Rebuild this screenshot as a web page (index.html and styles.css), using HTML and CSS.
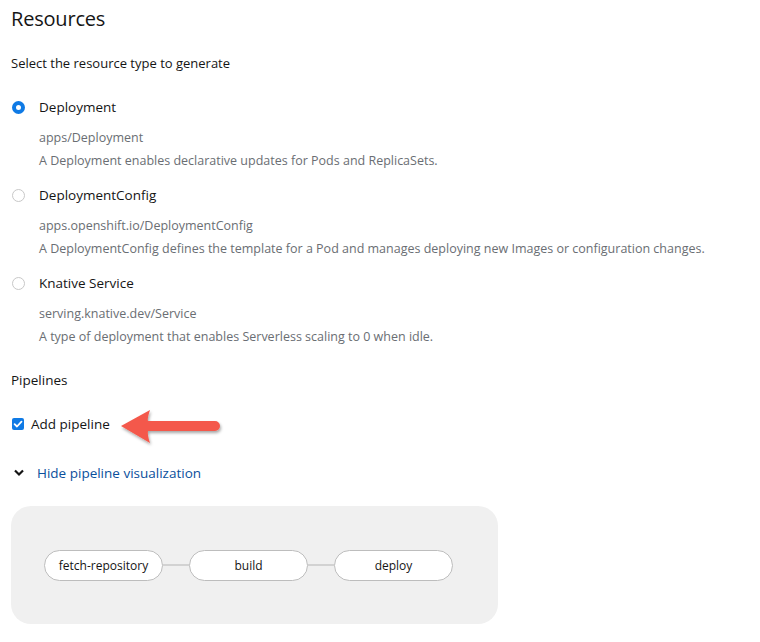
FILE: index.html
```html
<!DOCTYPE html>
<html>
<head>
<meta charset="utf-8">
<link rel="stylesheet" href="styles.css">
</head>
<body>
<div class="page">
  <h1 class="title">Resources</h1>
  <p class="intro">Select the resource type to generate</p>

  <div class="radio-group">
    <div class="radio-item">
      <div class="radio-row"><span class="radio checked"></span><span class="radio-label">Deployment</span></div>
      <div class="radio-sub">apps/Deployment</div>
      <div class="radio-desc">A Deployment enables declarative updates for Pods and ReplicaSets.</div>
    </div>
    <div class="radio-item">
      <div class="radio-row"><span class="radio"></span><span class="radio-label">DeploymentConfig</span></div>
      <div class="radio-sub">apps.openshift.io/DeploymentConfig</div>
      <div class="radio-desc">A DeploymentConfig defines the template for a Pod and manages deploying new Images or configuration changes.</div>
    </div>
    <div class="radio-item">
      <div class="radio-row"><span class="radio"></span><span class="radio-label">Knative Service</span></div>
      <div class="radio-sub">serving.knative.dev/Service</div>
      <div class="radio-desc">A type of deployment that enables Serverless scaling to 0 when idle.</div>
    </div>
  </div>

  <h2 class="section">Pipelines</h2>

  <div class="check-row">
    <span class="checkbox"><svg viewBox="0 0 12 12" width="12" height="12"><path d="M2.6 6.2 L5 8.5 L9.5 3.6" fill="none" stroke="#fff" stroke-width="1.8" stroke-linecap="round" stroke-linejoin="round"/></svg></span>
    <span class="check-label">Add pipeline</span>
    <svg class="arrow" viewBox="0 0 110 44" width="110" height="44">
      <defs>
        <filter id="sh" x="-20%" y="-30%" width="140%" height="170%">
          <feDropShadow dx="1" dy="2" stdDeviation="1.5" flood-color="#000" flood-opacity="0.35"/>
        </filter>
      </defs>
      <path filter="url(#sh)" fill="#f4594b" d="M4 20 L33 4 C31 10 30.5 13.5 31 15 L98 15 A5 5 0 0 1 98 25 L31 25 C30.5 27 31 31 33 37 Z"/>
    </svg>
  </div>

  <div class="toggle">
    <svg class="chev" viewBox="0 0 10 8" width="10" height="8"><path d="M1 1.5 L5 5.5 L9 1.5" fill="none" stroke="#151515" stroke-width="2.2"/></svg>
    <span class="toggle-text">Hide pipeline visualization</span>
  </div>

  <div class="viz">
    <div class="node">fetch-repository</div>
    <div class="edge"></div>
    <div class="node">build</div>
    <div class="edge"></div>
    <div class="node">deploy</div>
  </div>
</div>
</body>
</html>
```
FILE: styles.css
```css
* { box-sizing: border-box; }
html, body { margin: 0; padding: 0; background: #fff; }
body {
  font-family: "Open Sans", "Noto Sans", sans-serif;
  color: #151515;
}
.page { padding: 0 0 0 11px; }
.title {
  font-size: 20px;
  font-weight: 500;
  margin: 0;
  padding-top: 6px;
  line-height: 26px;
  letter-spacing: -0.2px;
}
.intro {
  font-size: 13px;
  margin: 21px 0 0;
  line-height: 20px;
}
.radio-group { margin-top: 25px; }
.radio-item { margin-bottom: 15px; }
.radio-row { display: flex; align-items: center; height: 18px; }
.radio {
  width: 13px; height: 13px;
  border-radius: 50%;
  border: 1px solid #c8c8c8;
  margin-left: 1px;
  flex: none;
  background: #fff;
}
.radio.checked {
  border: 4px solid #0f7ae5;
  background: #fff;
}
.radio-label { font-size: 13.5px; margin-left: 14px; }
.radio-sub, .radio-desc {
  font-size: 12.5px;
  color: #6a6e73;
  margin-left: 28px;
  line-height: 20px;
}
.radio-sub { margin-top: 12px; }
.radio-desc { margin-top: 3px; }
.section {
  font-size: 13.5px;
  font-weight: 500;
  margin: 23px 0 0;
  line-height: 20px;
}
.check-row {
  position: relative;
  display: flex;
  align-items: center;
  margin-top: 24px;
  height: 20px;
}
.checkbox {
  width: 12px; height: 12px;
  border-radius: 2px;
  background: #0f7ae5;
  margin-left: 1px;
  display: inline-flex;
}
.check-label { font-size: 13.5px; margin-left: 7px; }
.arrow { position: absolute; left: 106px; top: -8px; }
.toggle {
  display: flex;
  align-items: center;
  margin-top: 29px;
  height: 20px;
}
.chev { margin-left: 3px; }
.toggle-text { color: #0a4f9c; font-size: 13.5px; margin-left: 13px; }
.viz {
  margin-top: 23px;
  width: 487px;
  height: 118px;
  background: #f0f0f0;
  border-radius: 20px;
  display: flex;
  align-items: center;
  padding-left: 33px;
}
.node {
  width: 119px;
  height: 31px;
  border: 1px solid #bdbdbd;
  border-radius: 16px;
  background: #fff;
  display: flex;
  align-items: center;
  justify-content: center;
  font-size: 12px;
  color: #151515;
}
.edge { width: 26px; height: 2px; background: #d2d2d2; }
```
